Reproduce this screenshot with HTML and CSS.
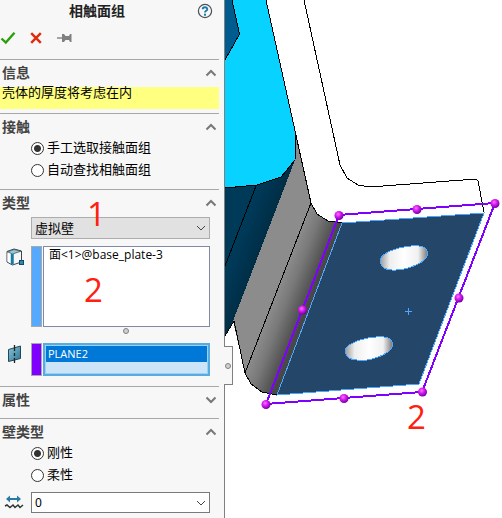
FILE: index.html
```html
<!DOCTYPE html>
<html lang="zh-CN">
<head>
<meta charset="utf-8">
<title>相触面组</title>
<link rel="stylesheet" href="styles.css">
</head>
<body>
<div class="app">
  <aside class="panel">
    <header class="panel-head">
      <h1 class="title">相触面组</h1>
      <button class="icon-btn help" type="button" aria-label="帮助">
        <svg width="16" height="16" viewBox="0 0 16 16"><circle cx="8" cy="8" r="6.6" fill="#f4f8fb" stroke="#4b5054" stroke-width="1.2"/><path d="M5.7 6.3C5.7 3.5 10.3 3.5 10.3 6.2C10.3 7.9 8 7.8 8 9.6" fill="none" stroke="#1b7aa8" stroke-width="1.9"/><rect x="7" y="10.7" width="2" height="2" fill="#1b7aa8"/></svg>
      </button>
    </header>
    <div class="actions">
      <button class="icon-btn" type="button" aria-label="确定">
        <svg width="16" height="14" viewBox="0 0 16 14"><path d="M1.5 7.5L5.8 11.6L14.5 1.8" fill="none" stroke="#2f9e0c" stroke-width="2.4"/></svg>
      </button>
      <button class="icon-btn" type="button" aria-label="取消">
        <svg width="12" height="12" viewBox="0 0 12 12"><path d="M1.2 1.2L10.8 10.8M10.8 1.2L1.2 10.8" stroke="#e02a0c" stroke-width="2.4"/></svg>
      </button>
      <button class="icon-btn" type="button" aria-label="保持可见">
        <svg width="15" height="10" viewBox="0 0 15 10"><path d="M0 5H6" stroke="#808080" stroke-width="1.4"/><path d="M5 1H7L8.500 3H12L13 1H14.500V9H13L12 7H8.500L7 9H5Z" fill="#808080"/></svg>
      </button>
    </div>

    <section class="group">
      <h2 class="group-head">信息<svg class="chevron" width="12" height="8" viewBox="0 0 12 8"><path d="M1.500 6.500L6 2L10.500 6.500"/></svg></h2>
      <p class="notice">壳体的厚度将考虑在内</p>
    </section>

    <section class="group contact">
      <h2 class="group-head">接触<svg class="chevron" width="12" height="8" viewBox="0 0 12 8"><path d="M1.500 6.500L6 2L10.500 6.500"/></svg></h2>
      <div class="radios">
        <label class="radio"><input type="radio" name="contact" checked>手工选取接触面组</label>
        <label class="radio"><input type="radio" name="contact">自动查找相触面组</label>
      </div>
    </section>

    <section class="group kind">
      <h2 class="group-head">类型<svg class="chevron" width="12" height="8" viewBox="0 0 12 8"><path d="M1.500 6.500L6 2L10.500 6.500"/></svg></h2>
      <div class="field">
        <select class="combo filled" aria-label="类型"><option>虚拟壁</option></select>
        <svg class="arrow" width="10" height="6" viewBox="0 0 10 6"><path d="M1 1L5 5L9 1"/></svg>
      </div>
      <div class="pick">
        <svg class="pick-icon" width="18" height="18" viewBox="0 0 18 18"><path d="M1 3.500L8 1L15.500 3V14L6.500 17L1 14Z" fill="#f4f6f7" stroke="#3b454b" stroke-width="1"/><path d="M1.500 3.800L8 1.500L15 3.200L6.500 6Z" fill="#8ec9df" stroke="#3b454b" stroke-width=".7"/><path d="M1.500 5L5 6.500V15.500L1.500 13.500Z" fill="#fff"/><path d="M5.500 6V16.500M7 6V16.500" stroke="#177ba4" stroke-width="1.500"/><rect x="13.500" y="12.500" width="4" height="4" fill="#2b8ab1" stroke="#174961"/></svg>
        <span class="swatch faces"></span>
        <ul class="list"><li>面&lt;1&gt;@base_plate-3</li></ul>
      </div>
      <div class="grip"></div>
      <div class="pick">
        <svg class="pick-icon" width="18" height="18" viewBox="0 0 18 18"><defs><linearGradient id="pl" x2="1" y2="1"><stop stop-color="#8cc7dd"/><stop offset="1" stop-color="#2c7290"/></linearGradient></defs><path d="M2.500 4.500L14.500 1V13.500L2.500 16.500Z" fill="url(#pl)" stroke="#244857"/><path d="M8.500 0V6M8.500 8V11M8.500 13V18" stroke="#222" stroke-width="1.300"/></svg>
        <span class="swatch plane"></span>
        <ul class="list active"><li>PLANE2</li></ul>
      </div>
    </section>

    <section class="group closed">
      <h2 class="group-head">属性<svg class="chevron" width="12" height="8" viewBox="0 0 12 8"><path d="M1.500 1.500L6 6L10.500 1.500"/></svg></h2>
    </section>

    <section class="group wall">
      <h2 class="group-head">壁类型<svg class="chevron" width="12" height="8" viewBox="0 0 12 8"><path d="M1.500 6.500L6 2L10.500 6.500"/></svg></h2>
      <div class="radios">
        <label class="radio"><input type="radio" name="wall" checked>刚性</label>
        <label class="radio"><input type="radio" name="wall">柔性</label>
      </div>
      <div class="field friction">
        <svg class="field-icon" width="20" height="14" viewBox="0 0 20 14"><path d="M3 4H16" stroke="#287ca3" stroke-width="2"/><path d="M2 4L6 .5V7.500ZM17 4L13 .5V7.500Z" fill="#287ca3"/><path d="M1 11L3 10L6 12.500L9 10L11 12.500L14 10L16 12.500L19 10" fill="none" stroke="#333" stroke-width="1.500"/></svg>
        <input class="combo" type="text" value="0" aria-label="摩擦系数">
        <svg class="arrow" width="10" height="6" viewBox="0 0 10 6"><path d="M1 1L5 5L9 1"/></svg>
      </div>
    </section>
    <div class="flyout"><span class="grip"></span></div>
    <span class="mark one">1</span>
    <span class="mark two">2</span>
  </aside>

  <main class="viewport">
    <svg class="scene" viewBox="225 0 277 518" preserveAspectRatio="xMinYMin slice" role="img" aria-label="模型">
      <defs>
        <linearGradient id="bend" gradientUnits="userSpaceOnUse" x1="278" y1="288" x2="309" y2="300"><stop stop-color="#8c8c8c"/><stop offset=".4" stop-color="#787878"/><stop offset="1" stop-color="#484848"/></linearGradient>
        <linearGradient id="teal" gradientUnits="userSpaceOnUse" x1="235" y1="250" x2="262" y2="260"><stop stop-color="#003a59"/><stop offset="1" stop-color="#002b42"/></linearGradient>
        <linearGradient id="hole"><stop stop-color="#999"/><stop offset=".2" stop-color="#eee"/><stop offset=".5" stop-color="#fff"/><stop offset=".8" stop-color="#f0f0f0"/><stop offset="1" stop-color="#777"/></linearGradient>
        <radialGradient id="ball" cx=".4" cy=".35" r=".65"><stop stop-color="#ff70ff"/><stop offset=".45" stop-color="#d91cf2"/><stop offset="1" stop-color="#7000a0"/></radialGradient>
        <circle id="node" r="4.500" fill="url(#ball)"/>
      </defs>
      <g shape-rendering="crispEdges">
        <path d="M225 188L257 185L281 177L295 160L234 321L225 336Z" fill="url(#teal)"/>
        <path d="M296 135L311 203L245 373L233 321L295 160Z" fill="#8c8c8c"/>
        <path d="M311 203L317 214L328 221L342 223L277 395L262 392L251 384L245 373Z" fill="url(#bend)"/>
        <path d="M225 0H266L296 135L295 160L281 177L257 185L225 188Z" fill="#08d2ff"/>
        <path d="M225 0H232L239.500 34L225 60Z" fill="#005b8e"/>
        <g fill="none" stroke="#000">
          <path d="M232 0L239.500 34L225 60M266 0L311 203L317 214L328 221L342 223M296 135L295 160L281 177L257 185L225 188M256 186L225 266M311 203L245 373M225 336L234 321L245 373L251 384L262 392L277 395"/>
          <path d="M304 0L340 165L347 178L358 185L370 187L476 179L478 181L484 212"/>
        </g>
        <path d="M342 223L484 213L419 384L277 395Z" fill="#234669" stroke="#4da6ff"/>
        <g fill="url(#hole)" stroke="#4da6ff">
          <path d="M380 261C380 249 421 241 426 249C435 260 407 271 392 270C385 270 381 267 380 261Z"/>
          <path d="M345 351C345 340 386 332 391 340C400 351 372 362 357 360C350 360 346 357 345 351Z"/>
        </g>
        <path d="M405 311.500H412M408.500 308V315" stroke="#4da6ff"/>
        <path d="M339 215L495 203L422 392L266 404Z" fill="none" stroke="#8000ff" stroke-width="2"/>
      </g>
      <use href="#node" x="339" y="215.500"/><use href="#node" x="417" y="209.500"/><use href="#node" x="495" y="203.500"/><use href="#node" x="459" y="298"/><use href="#node" x="422.500" y="392"/><use href="#node" x="344" y="398.500"/><use href="#node" x="266" y="404.500"/><use href="#node" x="302.500" y="310"/>
      <text class="scene-mark" x="407" y="429">2</text>
    </svg>
  </main>
</div>
</body>
</html>
```
FILE: styles.css
```css
* { box-sizing: border-box; }

body {
  margin: 0;
  background: #fff;
  color: #000;
  font: 13px/16px "Liberation Sans", "Noto Sans CJK SC", sans-serif;
}

h1, h2, p, ul { margin: 0; padding: 0; }

.app {
  display: grid;
  grid-template-columns: 225px 1fr;
  height: 100vh;
  overflow: hidden;
}

.panel {
  position: relative;
  border-right: 1px solid #808080;
  background: #f7f7f7;
}

.panel-head {
  display: grid;
  grid-template-columns: 1fr 30px;
  align-items: center;
  height: 22px;
}

.title {
  text-align: center;
  font-size: 14px;
  font-weight: 700;
  line-height: 22px;
  color: #222;
}

.icon-btn {
  display: flex;
  padding: 0;
  border: 0;
  background: none;
}

.help { justify-self: start; padding-left: 3px; }

.actions {
  display: flex;
  align-items: center;
  gap: 12px;
  height: 38px;
  padding-bottom: 6px;
  margin-right: 5px;
  border-bottom: 1px solid #a8a8a8;
}

.actions .icon-btn { justify-content: center; width: 16px; }

.group {
  margin-right: 5px;
  border-bottom: 1px solid #a8a8a8;
  padding-bottom: 4px;
}

.group-head {
  display: flex;
  align-items: center;
  justify-content: space-between;
  height: 27px;
  padding: 0 2px 2px;
  font-size: 14px;
  font-weight: 700;
  color: #444;
}

.chevron { fill: none; stroke: #787878; stroke-width: 2; }

.notice {
  height: 22px;
  padding-left: 2px;
  background: #ffff80;
  line-height: 12px;
}

.contact { padding-bottom: 12px; }
.kind { padding-bottom: 10px; }
.wall { border-bottom: 0; }

.radios {
  display: grid;
  gap: 8px;
  padding-left: 31px;
}

.radio {
  display: flex;
  align-items: center;
  gap: 3px;
  height: 14px;
}

.radio input {
  appearance: none;
  width: 13px;
  height: 13px;
  margin: 0;
  border: 1px solid #333;
  border-radius: 50%;
  background: #fff;
}

.radio input:checked {
  background: radial-gradient(circle, #333 3px, #fff 4px);
}

.field {
  position: relative;
  margin: 0 9px 0 31px;
}

.combo {
  display: block;
  appearance: none;
  width: 100%;
  height: 22px;
  padding: 0 3px;
  border: 1px solid #7a7a7a;
  border-radius: 0;
  background: #fff;
  color: #000;
  font: 13px/20px "Noto Sans", "Noto Sans CJK SC", sans-serif;
}

.combo.filled {
  padding-bottom: 2px;
  border-color: #adadad;
  background: #e1e1e1;
}

.arrow {
  position: absolute;
  top: 8px;
  right: 4px;
  fill: none;
  stroke: #444;
  pointer-events: none;
}

.friction { margin-top: 10px; }
.friction .combo { height: 21px; font-size: 12px; }
.field-icon { position: absolute; left: -27px; top: 3px; }

.pick {
  display: grid;
  grid-template-columns: 24px 11px 1fr;
  column-gap: 1px;
  padding: 0 9px 0 6px;
  margin-top: 7px;
}

.pick-icon { margin-top: 2px; }

.swatch { border: 1px solid #a8a8a8; }
.faces { background: #55a9ff; }
.plane { background: #8000ff; }

.list {
  height: 81px;
  padding: 0 5px;
  border: 1px solid #7f8ba5;
  background: #fff;
  list-style: none;
  font: 12px/16px "Open Sans", "Noto Sans CJK SC", sans-serif;
}

.list.active {
  height: 33px;
  padding: 0;
  border: 2px solid #56ace0;
  outline: 1px solid #9bd1f1;
  outline-offset: -3px;
  background: #cce4f7;
  font-size: 11px;
}

.list.active li {
  margin: 1px;
  padding-left: 2px;
  background: #0078d7;
  color: #fff;
}

.grip {
  width: 6px;
  height: 6px;
  border: 1px solid #808080;
  border-radius: 50%;
  background: #d0d0d0;
}

.kind > .grip { margin: 1px 0 9px 123px; }
.kind > .grip + .pick { margin-top: 0; }

.flyout {
  position: absolute;
  top: 346px;
  left: 224px;
  z-index: 1;
  display: grid;
  place-items: center;
  width: 9px;
  height: 39px;
  border: 1px solid #808080;
  border-left: 0;
  background: #f7f7f7;
}

.mark {
  position: absolute;
  color: #ff2010;
  font: 33px/40px "Open Sans", sans-serif;
  pointer-events: none;
}

.one { top: 194px; left: 87px; }
.two { top: 270px; left: 84px; }

.viewport { min-width: 0; overflow: hidden; }
.scene { display: block; width: 100%; height: 100%; }
.scene-mark { fill: #ff2010; font: 33px "Open Sans", sans-serif; }
```
